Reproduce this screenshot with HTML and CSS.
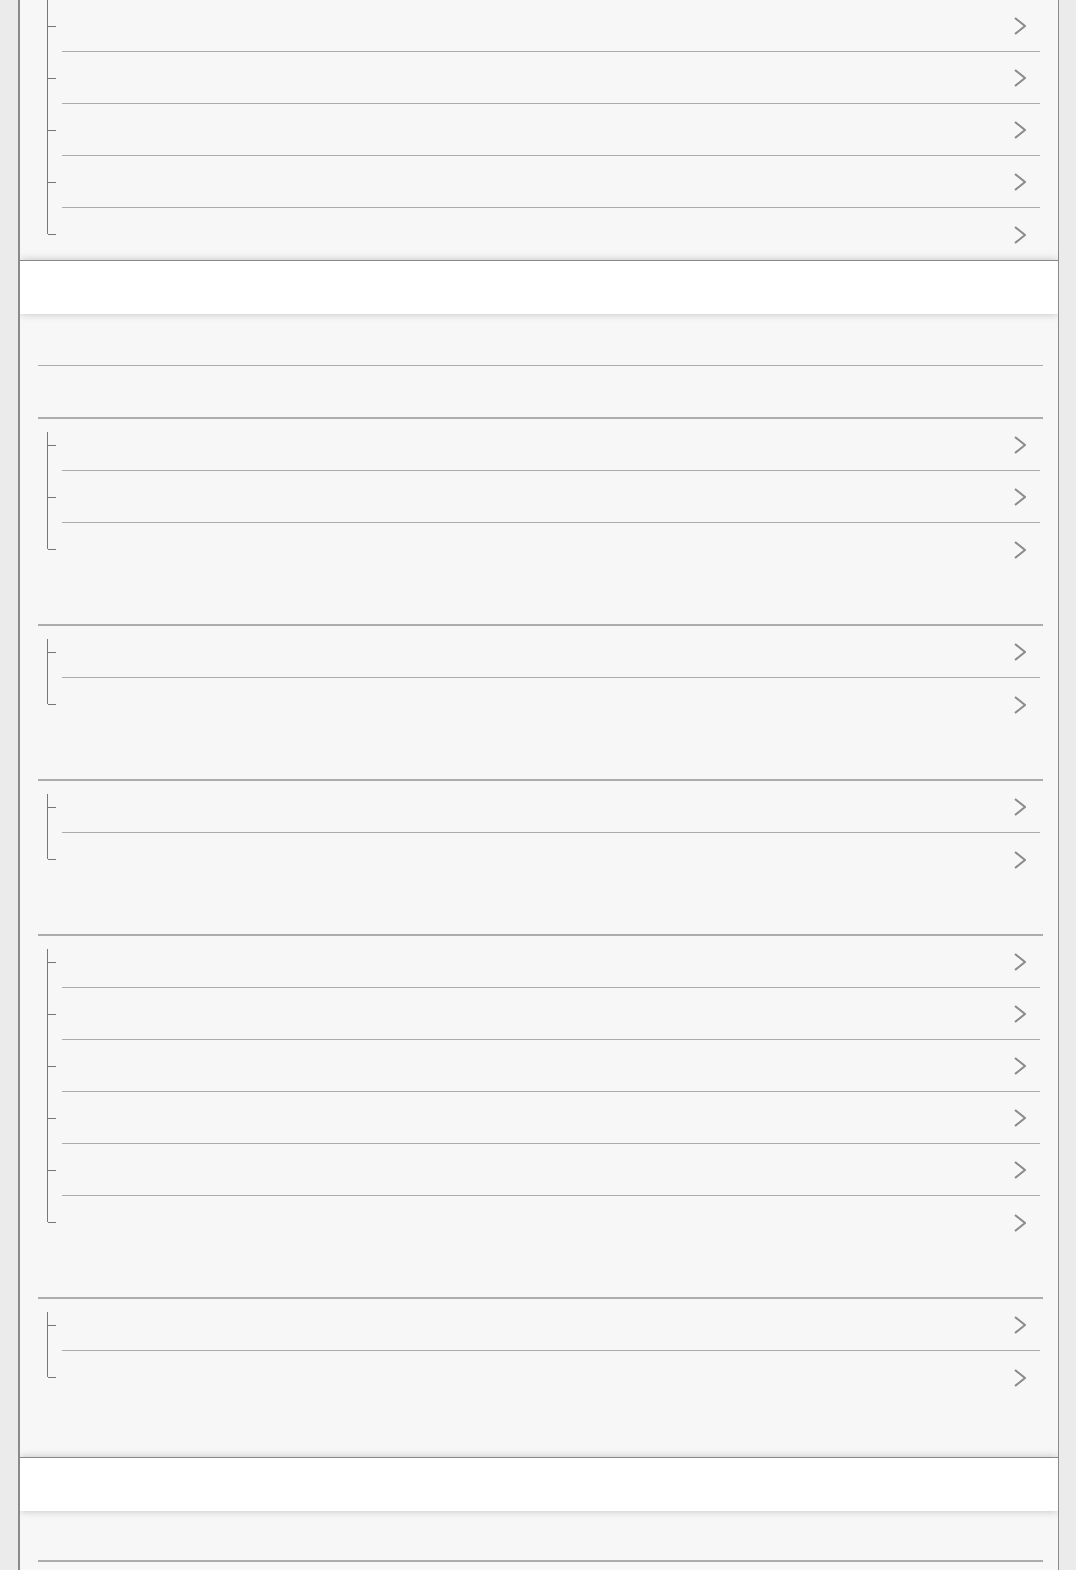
FILE: index.html
```html
<!DOCTYPE html>
<html lang="en">
<head>
  <meta charset="UTF-8">
  <title>Menu</title>
  <meta name="viewport" content="width=device-width, initial-scale=1.0">
  <link rel="stylesheet" href="styles.css">
</head>
<body>
  <div class="page">

    <section class="panel panel-top">
      <div class="group">
        <ul class="tree tree-cont">
          <li><a class="item" href="#"><svg class="chev" viewBox="0 0 12 18"><polyline points="1,1 11,9 1,17"/></svg></a></li>
          <li><a class="item" href="#"><svg class="chev" viewBox="0 0 12 18"><polyline points="1,1 11,9 1,17"/></svg></a></li>
          <li><a class="item" href="#"><svg class="chev" viewBox="0 0 12 18"><polyline points="1,1 11,9 1,17"/></svg></a></li>
          <li><a class="item" href="#"><svg class="chev" viewBox="0 0 12 18"><polyline points="1,1 11,9 1,17"/></svg></a></li>
          <li><a class="item" href="#"><svg class="chev" viewBox="0 0 12 18"><polyline points="1,1 11,9 1,17"/></svg></a></li>
        </ul>
      </div>
    </section>

    <div class="bar"></div>

    <section class="panel">
      <div class="lead"></div>

      <div class="group">
        <div class="group-title"></div>
        <ul class="tree">
          <li><a class="item" href="#"><svg class="chev" viewBox="0 0 12 18"><polyline points="1,1 11,9 1,17"/></svg></a></li>
          <li><a class="item" href="#"><svg class="chev" viewBox="0 0 12 18"><polyline points="1,1 11,9 1,17"/></svg></a></li>
          <li><a class="item" href="#"><svg class="chev" viewBox="0 0 12 18"><polyline points="1,1 11,9 1,17"/></svg></a></li>
        </ul>
      </div>

      <div class="group">
        <div class="group-title"></div>
        <ul class="tree">
          <li><a class="item" href="#"><svg class="chev" viewBox="0 0 12 18"><polyline points="1,1 11,9 1,17"/></svg></a></li>
          <li><a class="item" href="#"><svg class="chev" viewBox="0 0 12 18"><polyline points="1,1 11,9 1,17"/></svg></a></li>
        </ul>
      </div>

      <div class="group">
        <div class="group-title"></div>
        <ul class="tree">
          <li><a class="item" href="#"><svg class="chev" viewBox="0 0 12 18"><polyline points="1,1 11,9 1,17"/></svg></a></li>
          <li><a class="item" href="#"><svg class="chev" viewBox="0 0 12 18"><polyline points="1,1 11,9 1,17"/></svg></a></li>
        </ul>
      </div>

      <div class="group">
        <div class="group-title"></div>
        <ul class="tree">
          <li><a class="item" href="#"><svg class="chev" viewBox="0 0 12 18"><polyline points="1,1 11,9 1,17"/></svg></a></li>
          <li><a class="item" href="#"><svg class="chev" viewBox="0 0 12 18"><polyline points="1,1 11,9 1,17"/></svg></a></li>
          <li><a class="item" href="#"><svg class="chev" viewBox="0 0 12 18"><polyline points="1,1 11,9 1,17"/></svg></a></li>
          <li><a class="item" href="#"><svg class="chev" viewBox="0 0 12 18"><polyline points="1,1 11,9 1,17"/></svg></a></li>
          <li><a class="item" href="#"><svg class="chev" viewBox="0 0 12 18"><polyline points="1,1 11,9 1,17"/></svg></a></li>
          <li><a class="item" href="#"><svg class="chev" viewBox="0 0 12 18"><polyline points="1,1 11,9 1,17"/></svg></a></li>
        </ul>
      </div>

      <div class="group">
        <div class="group-title"></div>
        <ul class="tree">
          <li><a class="item" href="#"><svg class="chev" viewBox="0 0 12 18"><polyline points="1,1 11,9 1,17"/></svg></a></li>
          <li><a class="item" href="#"><svg class="chev" viewBox="0 0 12 18"><polyline points="1,1 11,9 1,17"/></svg></a></li>
        </ul>
      </div>
    </section>

    <div class="bar"></div>

    <section class="panel">
      <div class="group">
        <div class="group-title"></div>
        <ul class="tree">
          <li><a class="item" href="#"><svg class="chev" viewBox="0 0 12 18"><polyline points="1,1 11,9 1,17"/></svg></a></li>
          <li><a class="item" href="#"><svg class="chev" viewBox="0 0 12 18"><polyline points="1,1 11,9 1,17"/></svg></a></li>
        </ul>
      </div>
    </section>

  </div>
</body>
</html>
```

FILE: styles.css
```css
body {
  margin: 0;
  font-family: 'Liberation Sans', Arial, sans-serif;
  background: #ebebeb;
}

.page {
  margin: 0 17px 0 18px;
  min-height: 100vh;
  background: #f7f7f7;
  border-left: 2px solid #8a8a8a;
  border-right: 1px solid #8a8a8a;
  overflow: hidden;
}

.panel {
  padding-bottom: 54px;
}

.panel-top {
  padding-bottom: 0;
}

.bar {
  position: relative;
  z-index: 1;
  height: 52.5px;
  background: #fff;
  border-top: 1px solid #888;
  box-shadow: 0 0 8px rgba(0, 0, 0, 0.22);
}

.lead {
  box-sizing: border-box;
  height: 52px;
  margin: 0 15px 2.5px 18px;
  border-bottom: 1px solid #acacac;
}

.group {
  margin: 0 15px 0 18px;
}

.group-title {
  box-sizing: border-box;
  height: 51px;
  border-bottom: 2px solid #acacac;
}

.tree {
  position: relative;
  list-style: none;
  margin: 0 3px 0 0;
  padding: 0 0 0 24px;
}

.tree::before {
  content: '';
  position: absolute;
  left: 9px;
  top: 13px;
  bottom: 26px;
  width: 1px;
  background: #777;
}

.tree-cont::before {
  top: 0;
}

.tree li {
  position: relative;
  box-sizing: border-box;
  height: 52px;
  border-bottom: 1px solid #acacac;
}

.tree li:last-child {
  border-bottom: none;
}

.tree li::before {
  content: '';
  position: absolute;
  left: -14px;
  top: 50%;
  width: 8px;
  height: 1px;
  background: #777;
}

.item {
  display: flex;
  align-items: center;
  justify-content: flex-end;
  height: 100%;
  padding: 1px 14px 0 0;
  box-sizing: border-box;
}

.chev {
  width: 12px;
  height: 18px;
  fill: none;
  stroke: #8a8a8a;
  stroke-width: 2;
}
```
